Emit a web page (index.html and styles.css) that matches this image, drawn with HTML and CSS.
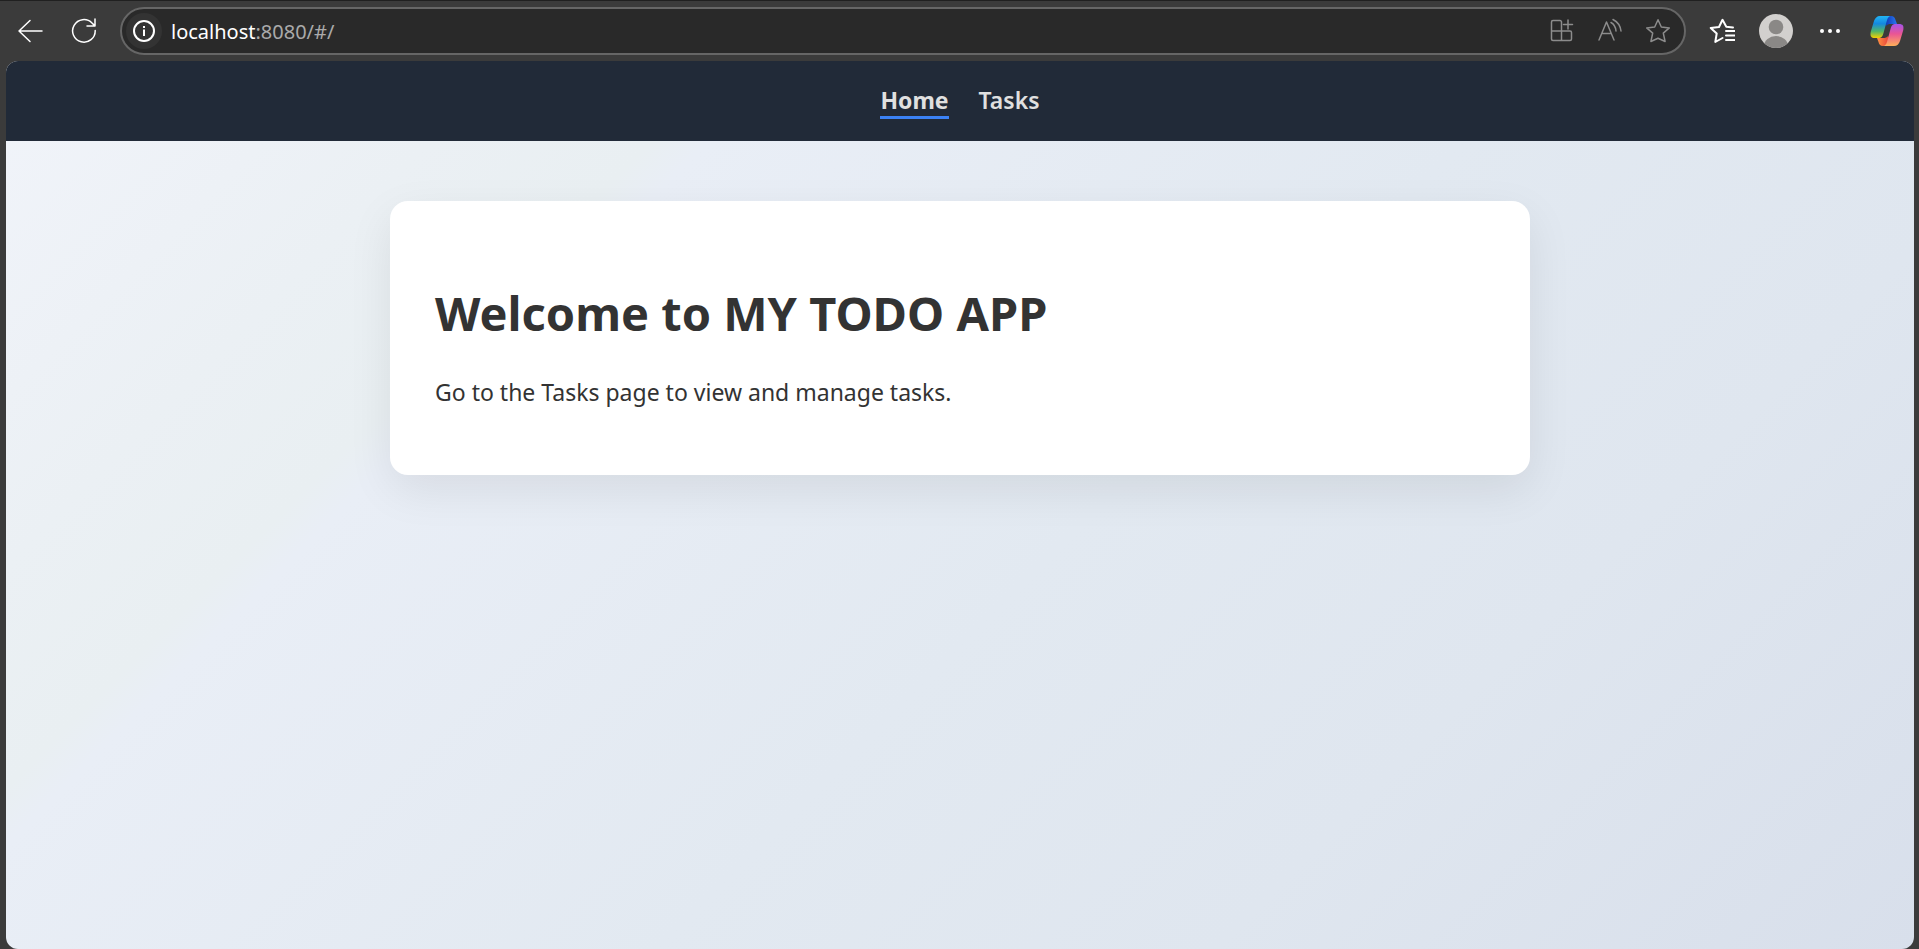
FILE: index.html
```html
<!DOCTYPE html>
<html lang="en">
<head>
<meta charset="utf-8">
<title>My Todo App</title>
<link rel="stylesheet" href="styles.css">
</head>
<body>
<div class="browser">
  <header class="toolbar">
    <button class="tool back" type="button" aria-label="Back">
      <svg width="26" height="24" viewBox="0 0 26 24"><path d="M25 12H2M13 1.500L2 12l11 10.500"/></svg>
    </button>
    <button class="tool refresh" type="button" aria-label="Refresh">
      <svg width="26" height="26" viewBox="0 0 26 26"><path d="M24.200 12.500A11.300 11.300 0 1 1 21 5l2.700 2.600M24 1v7h-8"/></svg>
    </button>
    <div class="address">
      <button class="info" type="button" aria-label="Site information">
        <svg width="24" height="24" viewBox="0 0 24 24"><circle class="thick" cx="12" cy="12" r="10"/><path class="stem" d="M12 10.500v6.500M12 7v2"/></svg>
      </button>
      <div class="url"><span class="host">localhost</span>:8080/#/</div>
      <button class="action" type="button" aria-label="App available">
        <svg width="26" height="26" viewBox="0 0 26 26"><path d="M12.500 13V4a1.500 1.500 0 0 0-1.500-1.500H4A1.500 1.500 0 0 0 2.500 4v17A1.500 1.500 0 0 0 4 22.500h17a1.500 1.500 0 0 0 1.500-1.500v-6.500a1.500 1.500 0 0 0-1.500-1.500H2.500M12.500 13v9.500M19 2v9M14.500 6.500h9"/></svg>
      </button>
      <button class="action" type="button" aria-label="Read aloud">
        <svg width="26" height="26" viewBox="0 0 26 26"><path d="M2 22L9.500 4 17 22M5 15.500h9M14 4.500Q18.500 7 19 13M16 1.500Q23 5 24 13"/></svg>
      </button>
      <button class="action" type="button" aria-label="Add to favorites">
        <svg width="26" height="26" viewBox="0 0 26 26"><path d="M13 1.800l3.300 7.200 8 .9-6 5.200 1.800 8.400-7.100-3.300-7.100 3.300 1.800-8.400-6-5.200 8-.9z"/></svg>
      </button>
    </div>
    <button class="tool" type="button" aria-label="Favorites">
      <svg width="26" height="26" viewBox="0 0 26 26"><path class="thick" d="M24 9.500l-6.700-.7L13.500 1.800 10 9l-8.300 1 6 5.500L6.300 24l7.200-4M17 13h8.500M17 17.500h8.500M17 22h8.500"/></svg>
    </button>
    <button class="tool" type="button" aria-label="Profile">
      <svg width="34" height="34" viewBox="0 0 34 34"><defs><clipPath id="face"><circle cx="17" cy="17" r="17"/></clipPath></defs><g clip-path="url(#face)" stroke="none"><path fill="#d2d0ce" d="M0 0h34v34H0z"/><circle cx="17" cy="13" r="7.300" fill="#8a8886"/><ellipse cx="17" cy="32" rx="12" ry="10" fill="#8a8886"/></g></svg>
    </button>
    <button class="tool" type="button" aria-label="Settings and more">
      <svg width="20" height="6" viewBox="0 0 20 6"><g fill="#fff" stroke="none"><circle cx="2" cy="3" r="2"/><circle cx="10" cy="3" r="2"/><circle cx="18" cy="3" r="2"/></g></svg>
    </button>
    <button class="tool copilot" type="button" aria-label="Copilot">
      <svg width="34" height="32" viewBox="0 0 34 32"><defs>
        <linearGradient id="cl" x1="0" y1="0" x2="0" y2="1"><stop offset="0" stop-color="#22b5f5"/><stop offset=".35" stop-color="#1488e0"/><stop offset=".7" stop-color="#54b666"/><stop offset="1" stop-color="#f5d000"/></linearGradient>
        <linearGradient id="cr" x1="0" y1="0" x2="0" y2="1"><stop offset="0" stop-color="#a553ea"/><stop offset=".45" stop-color="#ea5594"/><stop offset="1" stop-color="#ffb05a"/></linearGradient>
        <linearGradient id="ct"><stop offset="0" stop-color="#0d2fae"/><stop offset="1" stop-color="#2878f0"/></linearGradient>
        <linearGradient id="cb"><stop offset="0" stop-color="#ff9442"/><stop offset="1" stop-color="#e83a3a"/></linearGradient></defs>
        <g stroke="none"><path fill="url(#ct)" d="M14 1h7c3 0 4 2 4.500 4l1.500 4h-6c-2.500 0-4 .5-5 2z"/><path fill="url(#cb)" d="M20 31h-7c-3 0-4-2-4.500-4L7 23h6c2.500 0 4-.5 5-2z"/><path fill="url(#cl)" d="M10 1h10c-2 1-2.800 3-3.500 6L13.500 18c-1 4-2.500 5-5 5H5c-4 0-5-2-4.300-6L4 6c1-3 3-5 6-5z"/><path fill="url(#cr)" d="M24 31H14c2-1 2.800-3 3.500-6L20.500 14c1-4 2.500-5 5-5H29c4 0 5 2 4.300 6L30 26c-1 3-3 5-6 5z"/></g></svg>
    </button>
  </header>
  <div class="page">
    <nav class="nav">
      <a class="link active" href="#/">Home</a>
      <a class="link" href="#/tasks">Tasks</a>
    </nav>
    <main class="content">
      <section class="card">
        <h1 class="title">Welcome to MY TODO APP</h1>
        <p class="text">Go to the Tasks page to view and manage tasks.</p>
      </section>
    </main>
  </div>
</div>
</body>
</html>
```
FILE: styles.css
```css
* { box-sizing: border-box; }

body {
  margin: 0;
  background: #3b3b3b;
  color: #333;
  font-family: "Segoe UI", "Noto Sans", sans-serif;
}

button {
  padding: 0;
  border: 0;
  background: none;
}

svg {
  display: block;
  fill: none;
  stroke: currentColor;
  stroke-width: 1.5;
  stroke-linecap: round;
  stroke-linejoin: round;
}

.thick { stroke-width: 2; }

.stem {
  stroke-width: 2;
  stroke-linecap: butt;
}

.browser {
  display: flex;
  flex-direction: column;
  min-height: 100vh;
  padding: 0 5px 0 6px;
  border-top: 1px solid #202020;
}

.toolbar {
  display: flex;
  align-items: center;
  height: 60px;
}

.tool {
  display: grid;
  place-items: center;
  width: 54px;
  height: 48px;
  color: #fff;
}

.back { width: 48px; }

.refresh { width: 60px; }

.copilot {
  width: 57px;
  padding-left: 3px;
}

.address {
  display: flex;
  flex: 1;
  align-items: center;
  height: 48px;
  margin: 0 9px 0 6px;
  padding: 0 2px 0 4px;
  border: 2px solid #666;
  border-radius: 24px;
  background: #292929;
}

.info {
  display: grid;
  place-items: center;
  width: 36px;
  height: 36px;
  border-radius: 50%;
  background: #333;
  color: #fff;
}

.url {
  flex: 1;
  padding-left: 9px;
  color: #aaa;
  font-size: 20px;
}

.host { color: #fff; }

.action {
  display: grid;
  place-items: center;
  width: 48px;
  height: 40px;
  color: #8c8c8c;
}

.page {
  flex: 1;
  overflow: hidden;
  border-radius: 12px;
  background: linear-gradient(135deg, #f1f4fa 0%, #edf1f6 12%, #ebf0f4 18%, #e9eff2 26%, #e9eef6 28%, #e2e9f1 55%, #dfe6ef 75%, #d8dfeb 100%);
}

.nav {
  display: flex;
  align-items: center;
  justify-content: center;
  gap: 30px;
  height: 80px;
  background: #212a38;
}

.link {
  border-bottom: 3px solid transparent;
  color: #e0e0e0;
  font-size: 23px;
  font-weight: 600;
  line-height: 32px;
  text-decoration: none;
}

.active {
  border-color: #3b82f6;
  font-weight: 700;
}

.content { padding: 60px 24px; }

.card {
  max-width: 1140px;
  margin: 0 auto;
  padding: 80px 45px 66px;
  border-radius: 18px;
  background: #fff;
  box-shadow: 0 15px 45px rgba(0, 0, 0, 0.08);
}

.title {
  margin: 0 0 30px;
  font-size: 47px;
  line-height: 64px;
}

.text {
  margin: 0;
  font-size: 23px;
  line-height: 34px;
}
```
